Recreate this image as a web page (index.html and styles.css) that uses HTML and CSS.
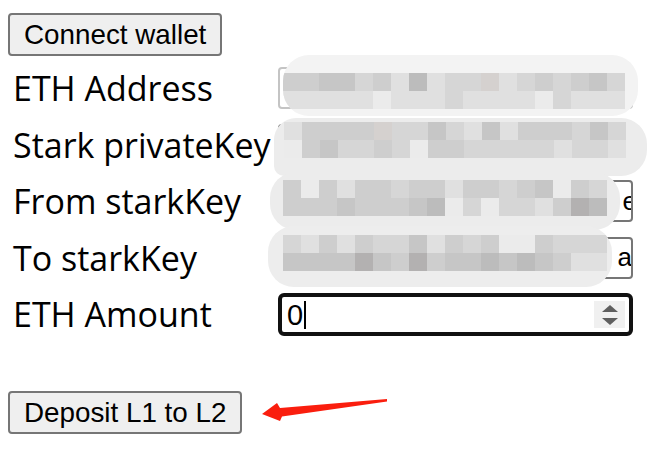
FILE: index.html
```html
<!DOCTYPE html>
<html>
<head>
<meta charset="utf-8">
<link rel="stylesheet" href="styles.css">
</head>
<body>
<div class="page">
  <button class="btn">Connect wallet</button>
  <div class="form">
    <div class="label">ETH Address</div>
    <div class="cell">
      <div class="field light"></div>
      <div class="blob b1">
        <div class="mosaic c19">
          <i class="d"></i><i class="d"></i><i class="e"></i><i class="e"></i><i class="c"></i><i class="d"></i><i class="b"></i><i class="f"></i><i class="b"></i><i class="c"></i><i class="c"></i><i class="w"></i><i class="b"></i><i class="c"></i><i class="d"></i><i class="c"></i><i class="d"></i><i class="e"></i><i class="c"></i>
          <i class="b"></i><i class="b"></i><i class="b"></i><i class="b"></i><i class="b"></i><i class="a"></i><i class="b"></i><i class="b"></i><i class="b"></i><i class="c"></i><i class="b"></i><i class="b"></i><i class="b"></i><i class="b"></i><i class="a"></i><i class="c"></i><i class="b"></i><i class="b"></i><i class="b"></i>
        </div>
      </div>
    </div>

    <div class="label">Stark privateKey</div>
    <div class="cell">
      <div class="field"></div>
      <div class="blob b2">
        <div class="mosaic c19">
          <i class="b"></i><i class="d"></i><i class="d"></i><i class="d"></i><i class="d"></i><i class="w"></i><i class="c"></i><i class="c"></i><i class="e"></i><i class="c"></i><i class="b"></i><i class="e"></i><i class="b"></i><i class="d"></i><i class="d"></i><i class="d"></i><i class="c"></i><i class="e"></i><i class="c"></i>
          <i class="a"></i><i class="d"></i><i class="e"></i><i class="c"></i><i class="c"></i><i class="d"></i><i class="c"></i><i class="a"></i><i class="d"></i><i class="d"></i><i class="c"></i><i class="c"></i><i class="c"></i><i class="c"></i><i class="c"></i><i class="b"></i><i class="c"></i><i class="c"></i><i class="b"></i>
        </div>
      </div>
    </div>

    <div class="label">From starkKey</div>
    <div class="cell">
      <div class="field"><span class="tail">e</span></div>
      <div class="blob b3">
        <div class="mosaic c18">
          <i class="d"></i><i class="a"></i><i class="d"></i><i class="b"></i><i class="d"></i><i class="d"></i><i class="c"></i><i class="d"></i><i class="d"></i><i class="b"></i><i class="d"></i><i class="d"></i><i class="c"></i><i class="d"></i><i class="e"></i><i class="a"></i><i class="d"></i><i class="c"></i>
          <i class="d"></i><i class="d"></i><i class="d"></i><i class="e"></i><i class="d"></i><i class="d"></i><i class="d"></i><i class="e"></i><i class="f"></i><i class="a"></i><i class="c"></i><i class="a"></i><i class="c"></i><i class="c"></i><i class="b"></i><i class="d"></i><i class="g"></i><i class="f"></i>
        </div>
      </div>
    </div>

    <div class="label">To starkKey</div>
    <div class="cell">
      <div class="field"><span class="tail">a'</span></div>
      <div class="blob b4">
        <div class="mosaic c18">
          <i class="c"></i><i class="b"></i><i class="d"></i><i class="b"></i><i class="d"></i><i class="c"></i><i class="c"></i><i class="e"></i><i class="b"></i><i class="d"></i><i class="c"></i><i class="d"></i><i class="a"></i><i class="a"></i><i class="d"></i><i class="c"></i><i class="c"></i><i class="c"></i>
          <i class="e"></i><i class="e"></i><i class="e"></i><i class="e"></i><i class="g"></i><i class="e"></i><i class="d"></i><i class="g"></i><i class="d"></i><i class="e"></i><i class="e"></i><i class="f"></i><i class="e"></i><i class="f"></i><i class="e"></i><i class="d"></i><i class="b"></i><i class="b"></i>
        </div>
      </div>
    </div>

    <div class="label">ETH Amount</div>
    <div class="cell">
      <div class="field focus">
        <span class="value">0</span><span class="caret"></span>
        <span class="spin">
          <svg width="18" height="24" viewBox="0 0 18 24"><polygon points="9,2 17,9 1,9" fill="#5f5f5f"/><polygon points="1,15 17,15 9,22" fill="#5f5f5f"/></svg>
        </span>
      </div>
    </div>
  </div>
  <button class="btn deposit">Deposit L1 to L2</button>
</div>
<svg class="arrow" width="653" height="457" viewBox="0 0 653 457">
  <polygon points="262,414 277,403 280,408 387,399 387,401.5 282,416.5 280,421" fill="#fa1e0e"/>
</svg>
</body>
</html>
```

FILE: styles.css
```css
html, body {
  margin: 0;
  padding: 0;
  background: #fff;
}
.page {
  padding: 13px 0 0 8px;
}
.btn {
  display: block;
  font-family: "Liberation Sans", Arial, sans-serif;
  font-size: 27.8px;
  color: #000;
  background: #efefef;
  border: 2px solid #767676;
  border-radius: 4px;
  padding: 2px 14px;
  height: 43px;
  line-height: 35px;
  margin: 0;
}
.form {
  display: grid;
  grid-template-columns: 270px 355px;
  grid-auto-rows: 42px;
  row-gap: 14.5px;
  margin-top: 11px;
}
.label {
  font-family: "Open Sans", "Noto Sans", sans-serif;
  font-size: 34px;
  color: #000;
  display: flex;
  align-items: center;
  padding-left: 5px;
  white-space: nowrap;
  letter-spacing: 0;
}
.cell {
  position: relative;
}
.field {
  box-sizing: border-box;
  height: 42px;
  border: 2px solid #767676;
  border-radius: 4px;
  background: #fff;
  display: flex;
  align-items: center;
  justify-content: flex-end;
  overflow: hidden;
  font-family: "Liberation Sans", Arial, sans-serif;
  font-size: 26px;
}
.field.light {
  border-color: #c4c4c4;
}
.tail {
  margin-right: -6px;
  color: #000;
}
.field.focus {
  border: 4px solid #111;
  border-radius: 6px;
  justify-content: flex-start;
  padding-left: 5px;
  height: 43px;
}
.value {
  font-size: 29px;
  line-height: 30px;
}
.caret {
  width: 2px;
  height: 28px;
  background: #000;
  margin-left: 1px;
}
.spin {
  margin-left: auto;
  margin-right: 4px;
  width: 31px;
  height: 27px;
  background: #f0f0f0;
  display: flex;
  align-items: center;
  justify-content: center;
}
.spin svg {
  display: block;
}
.blob {
  position: absolute;
  background: #efefef;
  border-radius: 26px;
  overflow: hidden;
  box-sizing: border-box;
}
.b1 {
  left: 5px; top: -12px; width: 355px; height: 61px;
  padding-top: 18px;
  background: #f3f3f3;
}
.b2 {
  left: -4px; top: -6px; width: 373px; height: 58px;
  padding-top: 4px; padding-left: 10px;
  background: #ececec;
  border-radius: 22px 26px 26px 10px;
}
.b3 {
  left: -8px; top: -8px; width: 350px; height: 58px;
  padding-top: 8px; padding-left: 13px;
  background: #ececec;
}
.b4 {
  left: -10px; top: -11px; width: 344px; height: 61px;
  padding-top: 9px; padding-left: 15px;
  background: #ededed;
}
.mosaic {
  display: grid;
  grid-auto-rows: 18px;
}
.c19 { grid-template-columns: repeat(19, 18px); }
.c18 { grid-template-columns: repeat(18, 18px); }
.mosaic i { display: block; }
.mosaic .a { background: #ebebeb; }
.mosaic .b { background: #e0e0e0; }
.mosaic .c { background: #d6d6d6; }
.mosaic .d { background: #cecece; }
.mosaic .e { background: #c6c6c6; }
.mosaic .f { background: #bcbcbc; }
.mosaic .g { background: #b3b1b1; }
.mosaic .w { background: #d5d1cf; }
.deposit {
  margin-top: 56px;
}
.arrow {
  position: absolute;
  left: 0;
  top: 0;
  pointer-events: none;
}
```
